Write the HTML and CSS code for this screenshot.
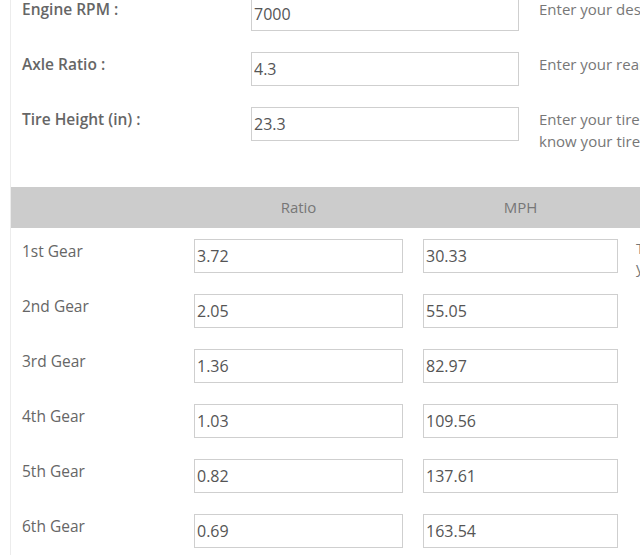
FILE: index.html
```html
<!DOCTYPE html>
<html lang="en">
<head>
    <meta charset="UTF-8">
    <meta name="viewport" content="width=device-width, initial-scale=1.0">
    <title>Gear Ratio Calculator</title>
    <link rel="stylesheet" href="styles.css">
</head>
<body>
    <div class="page">
        <!-- Engine and axle inputs -->
        <div class="calc-form">
            <div class="form-row">
                <label class="form-label" for="rpm">Engine RPM :</label>
                <input type="text" id="rpm" class="field field-wide" value="7000">
                <p class="help">Enter your desired RPM.</p>
            </div>
            <div class="form-row">
                <label class="form-label" for="axle">Axle Ratio :</label>
                <input type="text" id="axle" class="field field-wide" value="4.3">
                <p class="help">Enter your rear axle ratio.</p>
            </div>
            <div class="form-row">
                <label class="form-label" for="tire">Tire Height (in) :</label>
                <input type="text" id="tire" class="field field-wide" value="23.3">
                <p class="help">Enter your tire height. If you don't<br>know your tire height, measure it.</p>
            </div>
        </div>

        <!-- Gear table -->
        <div class="gear-table">
            <div class="gear-head">
                <div></div>
                <div>Ratio</div>
                <div>MPH</div>
                <div></div>
            </div>
            <div class="gear-body">
                <div class="gear-row">
                    <div class="gear-name">1st Gear</div>
                    <div class="gear-cell"><input type="text" class="field" value="3.72"></div>
                    <div class="gear-cell"><input type="text" class="field" value="30.33"></div>
                    <div class="gear-note">Type in the gear ratios<br>your transmission uses.</div>
                </div>
                <div class="gear-row">
                    <div class="gear-name">2nd Gear</div>
                    <div class="gear-cell"><input type="text" class="field" value="2.05"></div>
                    <div class="gear-cell"><input type="text" class="field" value="55.05"></div>
                    <div class="gear-note"></div>
                </div>
                <div class="gear-row">
                    <div class="gear-name">3rd Gear</div>
                    <div class="gear-cell"><input type="text" class="field" value="1.36"></div>
                    <div class="gear-cell"><input type="text" class="field" value="82.97"></div>
                    <div class="gear-note"></div>
                </div>
                <div class="gear-row">
                    <div class="gear-name">4th Gear</div>
                    <div class="gear-cell"><input type="text" class="field" value="1.03"></div>
                    <div class="gear-cell"><input type="text" class="field" value="109.56"></div>
                    <div class="gear-note"></div>
                </div>
                <div class="gear-row">
                    <div class="gear-name">5th Gear</div>
                    <div class="gear-cell"><input type="text" class="field" value="0.82"></div>
                    <div class="gear-cell"><input type="text" class="field" value="137.61"></div>
                    <div class="gear-note"></div>
                </div>
                <div class="gear-row">
                    <div class="gear-name">6th Gear</div>
                    <div class="gear-cell"><input type="text" class="field" value="0.69"></div>
                    <div class="gear-cell"><input type="text" class="field" value="163.54"></div>
                    <div class="gear-note"></div>
                </div>
            </div>
        </div>
    </div>
</body>
</html>
```

FILE: styles.css
```css
html, body {
    margin: 0;
    padding: 0;
    background-color: #fff;
    overflow: hidden;
}

body {
    font-family: 'Open Sans', 'Liberation Sans', sans-serif;
    font-size: 15px;
    color: #666;
}

.page {
    margin-left: 10px;
    border-left: 1px solid #ececec;
    min-height: 100vh;
    width: 900px;
}

/* top form */
.calc-form {
    margin-top: -3px;
    padding: 0 0 35px 11px;
    display: flex;
    flex-direction: column;
    gap: 21px;
}

.form-row {
    display: flex;
    align-items: flex-start;
}

.form-label {
    width: 229px;
    flex: none;
    padding-top: 1px;
    line-height: 22px;
    font-weight: 600;
    font-size: 15.5px;
    color: #666;
}

.help {
    margin: 0 0 0 20px;
    padding-top: 1px;
    line-height: 22px;
    white-space: nowrap;
    color: #777;
}

.field {
    box-sizing: border-box;
    height: 34px;
    padding: 0 2px;
    border: 1px solid #cfcfcf;
    border-radius: 0;
    font-family: 'Open Sans', 'Liberation Sans', sans-serif;
    font-size: 16px;
    color: #555;
    background-color: #fff;
    width: 100%;
}

.field-wide {
    width: 268px;
    flex: none;
}

/* gear table */
.gear-head,
.gear-row {
    display: grid;
    grid-template-columns: 173px 229px 215px 300px;
}

.gear-head {
    height: 41px;
    background-color: #cccccc;
    color: #777;
    line-height: 41px;
    text-align: center;
}

.gear-body {
    padding-top: 11px;
    display: flex;
    flex-direction: column;
    gap: 21px;
}

.gear-row {
    height: 34px;
}

.gear-name {
    padding: 1px 0 0 11px;
    line-height: 22px;
    font-size: 15.5px;
}

.gear-cell {
    padding: 0 10px;
}

.gear-note {
    line-height: 19px;
    padding-left: 8px;
    color: #777;
    white-space: nowrap;
}
```
